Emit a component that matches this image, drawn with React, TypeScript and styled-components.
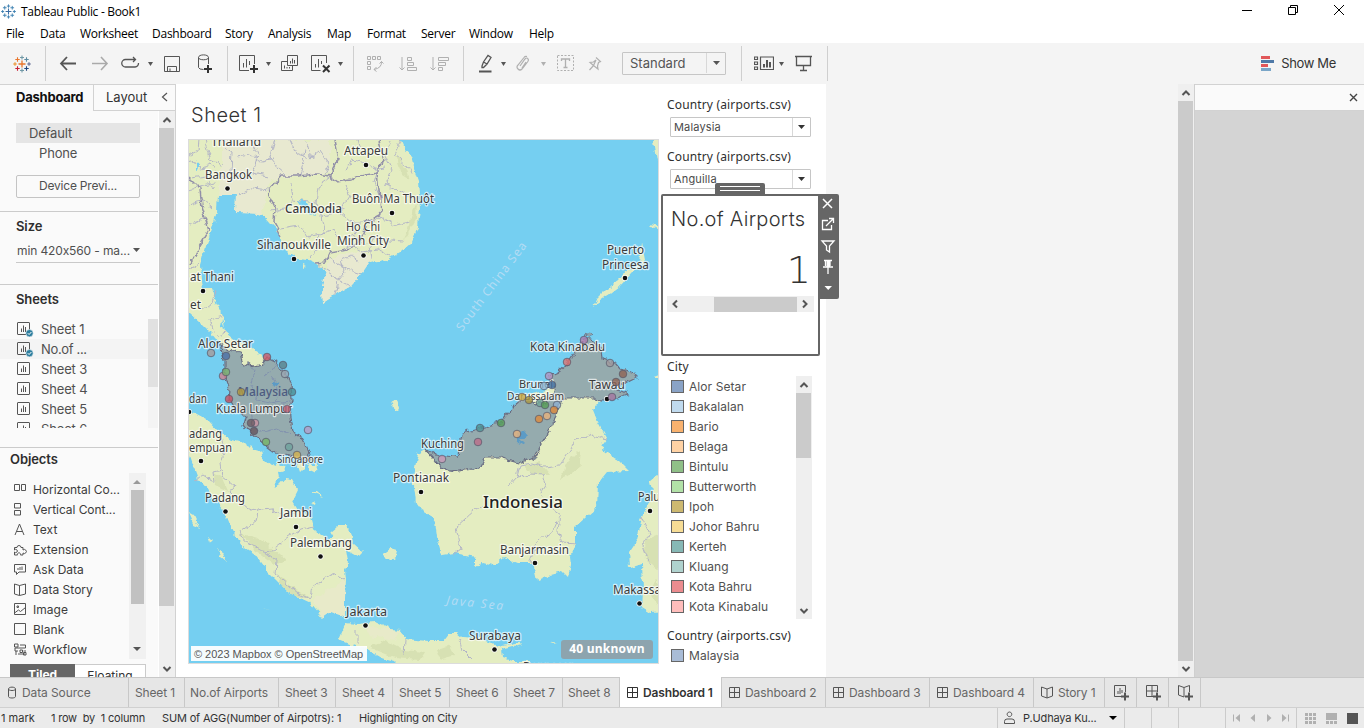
import React from "react";
import styled, { createGlobalStyle, css } from "styled-components";

const GlobalStyle = createGlobalStyle`
  * { box-sizing: border-box; }
  body { margin: 0; overflow: hidden; background: #fff; }
`;

const uiFont = `Inter, "Liberation Sans", sans-serif`;
const winFont = `"Open Sans", "Noto Sans", sans-serif`;

/* ---------- generic text ---------- */
const Label = styled.span<{ $ls?: number }>`
  white-space: pre;
  letter-spacing: ${(p) => p.$ls ?? 0}px;
`;

/* ---------- window frame ---------- */
const Frame = styled.div`
  width: 1364px;
  height: 728px;
  display: flex;
  flex-direction: column;
  overflow: hidden;
  font-family: ${uiFont};
  font-feature-settings: "calt" 0;
  font-size: 13px;
  color: #505050;
  background: #fff;
`;

const TitleBar = styled.header`
  height: 24px;
  flex: none;
  display: flex;
  align-items: center;
  padding: 0 19px 2px 1px;
  font-family: ${winFont};
  font-size: 12px;
  color: #000;
`;
const WindowTitle = styled.span`
  margin-left: 5px;
  letter-spacing: -0.3px;
  flex: 1;
`;
const WindowButtons = styled.div`
  display: flex;
  gap: 34px;
  align-items: center;
  padding-bottom: 2px;
`;

const MenuBar = styled.nav`
  height: 19px;
  flex: none;
  display: flex;
  align-items: center;
  font-family: ${winFont};
  font-size: 12px;
  color: #000;
`;
const MenuItem = styled.span<{ $w: number }>`
  width: ${(p) => p.$w}px;
  white-space: nowrap;
  letter-spacing: -0.25px;
  padding-left: 6px;
`;

const Toolbar = styled.div`
  height: 41px;
  flex: none;
  background: #f4f4f4;
  display: flex;
  align-items: center;
`;
const ToolGroup = styled.div<{ $w: number }>`
  width: ${(p) => p.$w}px;
  height: 35px;
  border-right: 1px solid #cfcfcf;
  display: flex;
  align-items: center;
`;
const Tool = styled.span<{ $l: number }>`
  margin-left: ${(p) => p.$l}px;
  display: flex;
  flex: none;
`;
const FitSelect = styled.div`
  margin-left: 20px;
  width: 104px;
  height: 23px;
  border: 1px solid #c6c6c6;
  border-radius: 1px;
  display: flex;
  align-items: center;
  padding: 0 0 1px 7px;
  font-size: 13px;
  color: #555;
`;
const SelectArrow = styled.span<{ $w: number }>`
  margin-left: auto;
  width: ${(p) => p.$w}px;
  align-self: stretch;
  border-left: 1px solid #d8d8d8;
  display: flex;
  align-items: center;
  justify-content: center;
`;
const ShowMe = styled.div`
  margin-left: auto;
  margin-right: 28px;
  padding-bottom: 1px;
  display: flex;
  align-items: center;
  gap: 6px;
  color: #333;
`;

/* ---------- body ---------- */
const Body = styled.main`
  height: 593px;
  flex: none;
  display: flex;
`;

const SidePane = styled.aside`
  width: 176px;
  height: 593px;
  border-right: 1px solid #d2d2d2;
  background: #fafafa;
  display: flex;
  flex-direction: column;
  overflow: hidden;
`;
const PaneTabs = styled.div`
  height: 27px;
  flex: none;
  display: flex;
  border-top: 1px solid #d2d2d2;
`;
const PaneTab = styled.div<{ $active?: boolean }>`
  width: ${(p) => (p.$active ? 93 : 82)}px;
  display: flex;
  align-items: center;
  padding-bottom: ${(p) => (p.$active ? 2 : 1)}px;
  padding-left: ${(p) => (p.$active ? 16 : 12)}px;
  font-weight: ${(p) => (p.$active ? 700 : 400)};
  color: ${(p) => (p.$active ? "#111" : "#333")};
  ${(p) =>
    !p.$active &&
    css`
      border-left: 1px solid #d2d2d2;
      border-bottom: 1px solid #d2d2d2;
    `}
`;
const PaneBody = styled.div`
  display: flex;
  flex: 1;
  min-height: 0;
`;
const PaneContent = styled.div`
  width: 159px;
  overflow: hidden;
  border-right: 1px solid #fff;
`;
const Section = styled.section<{ $h: number }>`
  height: ${(p) => p.$h}px;
  border-bottom: 1px solid #cbcbcb;
  overflow: hidden;
`;
const SectionTitle = styled.h3<{ $l?: number; $h: number; $t?: number }>`
  margin: 0;
  height: ${(p) => p.$h}px;
  padding: ${(p) => p.$t ?? 5}px 0 0 ${(p) => p.$l ?? 16}px;
  font-size: 13px;
  line-height: 18px;
  font-weight: 600;
  letter-spacing: -0.1px;
  color: #2e2e2e;
`;
const DeviceRow = styled.div<{ $on?: boolean }>`
  margin: ${(p) => (p.$on ? "12px" : "0")} 0 0 16px;
  width: 124px;
  height: 20px;
  line-height: 20px;
  padding-left: ${(p) => (p.$on ? 13 : 23)}px;
  letter-spacing: -0.15px;
  background: ${(p) => (p.$on ? "#e5e5e5" : "none")};
`;
const PreviewButton = styled.div`
  margin: 12px 0 0 16px;
  width: 124px;
  height: 23px;
  border: 1px solid #c4c4c4;
  border-radius: 2px;
  text-align: center;
  line-height: 20px;
  font-size: 12px;
  letter-spacing: -0.2px;
`;
const SizeSelect = styled.div`
  margin-left: 16px;
  width: 124px;
  height: 25px;
  border-bottom: 1px solid #c9c9c9;
  display: flex;
  align-items: center;
  justify-content: space-between;
  font-size: 12px;
  padding-left: 1px;
`;
const SheetList = styled.div`
  height: 109px;
  display: flex;
  overflow: hidden;
`;
const SheetRows = styled.div`
  flex: 1;
`;
const SheetRow = styled.div<{ $on?: boolean }>`
  height: 20px;
  display: flex;
  align-items: center;
  gap: 7px;
  padding-left: 17px;
  background: ${(p) => (p.$on ? "#f4f4f4" : "none")};
`;
const SlimTrack = styled.div`
  width: 10px;
  background: #f4f4f4;
`;
const SlimThumb = styled.div`
  height: 68px;
  background: #e1e1e1;
`;
const ObjectList = styled.div`
  display: flex;
  height: 186px;
`;
const ObjectRows = styled.div`
  width: 129px;
  padding-top: 6px;
`;
const ObjectRow = styled.div`
  height: 20px;
  display: flex;
  align-items: center;
  gap: 6px;
  padding-left: 13px;
  font-size: 12px;
  color: #3c3c3c;
  white-space: nowrap;
`;
const Toggle = styled.div`
  margin: 5px 0 0 10px;
  width: 136px;
  height: 22px;
  display: flex;
  border: 1px solid #cbcbcb;
  font-size: 12px;
  text-align: center;
  line-height: 22px;
`;
const ToggleSide = styled.span<{ $on?: boolean; $w: number }>`
  width: ${(p) => p.$w}px;
  flex: none;
  margin: ${(p) => (p.$on ? "-1px 0 0 -1px" : "0")};
  background: ${(p) => (p.$on ? "#666" : "#fff")};
  color: ${(p) => (p.$on ? "#fff" : "#333")};
  font-weight: ${(p) => (p.$on ? 700 : 400)};
`;

/* ---------- scrollbars ---------- */
const VTrack = styled.div<{ $w: number; $bg?: string }>`
  width: ${(p) => p.$w}px;
  flex: none;
  background: ${(p) => p.$bg ?? "#efefef"};
  display: flex;
  flex-direction: column;
  align-items: flex-start;
`;
const ScrollEnd = styled.span<{ $h: number }>`
  height: ${(p) => p.$h}px;
  width: calc(100% - 1px);
  flex: none;
  display: flex;
  align-items: center;
  justify-content: center;
`;
const VThumb = styled.div<{ $h: number; $w: number; $c?: string; $l?: number }>`
  height: ${(p) => p.$h}px;
  width: ${(p) => p.$w}px;
  margin-left: ${(p) => p.$l ?? 0}px;
  background: ${(p) => p.$c ?? "#cbcbcb"};
`;
const Spring = styled.span`
  flex: 1;
`;

/* ---------- dashboard ---------- */
const Dashboard = styled.section`
  width: 650px;
  height: 593px;
  display: flex;
  background: #fff;
`;
const MapColumn = styled.div`
  width: 483px;
  padding-left: 12px;
`;
const SheetTitle = styled.h2`
  margin: 0;
  height: 55px;
  padding: 16px 0 0 3px;
  font-size: 20px;
  line-height: 30px;
  font-weight: 300;
  letter-spacing: 0.5px;
  color: #333;
`;
const MapBox = styled.div`
  position: relative;
  width: 471px;
  height: 525px;
  border: 1px solid #dcdcdc;
  overflow: hidden;
`;
const MapCredit = styled.div`
  position: absolute;
  left: 2px;
  bottom: 2px;
  height: 15px;
  width: 176px;
  padding-left: 3px;
  background: rgba(255, 255, 255, 0.93);
  font: 11px/17px "Liberation Sans", sans-serif;
  letter-spacing: -0.02px;
  color: #555;
  white-space: nowrap;
`;
const UnknownBadge = styled.div`
  position: absolute;
  right: 5px;
  bottom: 4px;
  width: 92px;
  height: 19px;
  border-radius: 3px;
  background: #8da4ae;
  color: #fff;
  font: 700 12px/18px "Open Sans", sans-serif;
  letter-spacing: 0.2px;
  text-align: center;
`;
const SideColumn = styled.div`
  width: 167px;
  padding-left: 2px;
`;
const FilterTitle = styled.div<{ $t: number }>`
  padding-left: 6px;
  height: 16px;
  margin-top: ${(p) => p.$t}px;
  line-height: 16px;
  font-family: "Noto Sans", sans-serif;
  font-size: 12px;
  letter-spacing: 0.15px;
  color: #2f2f2f;
`;
const FilterSelect = styled.div`
  margin: 4px 0 0 9px;
  width: 141px;
  height: 20px;
  border: 1px solid #c6c6c6;
  border-radius: 1px;
  display: flex;
  align-items: center;
  padding-left: 3px;
  font-size: 11px;
  color: #4a4a4a;
`;
const NumberCard = styled.div`
  position: relative;
  margin: 5px 0 0 0;
  width: 159px;
  height: 162px;
  border: 2px solid #666;
  border-radius: 2px;
  background: #fff;
  padding: 9px 4px 0 4px;
`;
const CardTitle = styled.div`
  padding-left: 4px;
  font-size: 20px;
  line-height: 28px;
  font-weight: 300;
  letter-spacing: 0.3px;
  white-space: nowrap;
  color: #333;
`;
const BigNumber = styled.div`
  height: 63px;
  padding: 15px 3px 0 0;
  text-align: right;
  font: 200 38px/44px "DejaVu Sans Light", "DejaVu Sans", sans-serif;
  color: #333;
`;
const HTrack = styled.div`
  width: 147px;
  height: 16px;
  background: #efefef;
  display: flex;
  align-items: center;
`;
const HThumb = styled.div`
  margin-left: 31px;
  width: 83px;
  height: 15px;
  background: #cbcbcb;
`;
const HEnd = styled.span`
  width: 16px;
  display: flex;
  justify-content: center;
`;
const Grip = styled.div`
  position: absolute;
  left: 52px;
  top: -13px;
  width: 50px;
  height: 12px;
  border-radius: 2px 2px 0 0;
  background: #666;
  padding: 3px 5px;
  display: flex;
  flex-direction: column;
  gap: 3px;
`;
const GripLine = styled.span`
  height: 1px;
  background: #fff;
`;
const CardTools = styled.div`
  position: absolute;
  left: 155px;
  top: -2px;
  width: 21px;
  height: 105px;
  border-radius: 0 2px 2px 0;
  background: #666;
`;
const Legend = styled.div`
  display: flex;
  height: 243px;
  margin-top: 1px;
`;
const LegendRows = styled.div`
  width: 135px;
`;
const LegendRow = styled.div<{ $t?: number }>`
  height: 20px;
  margin-top: ${(p) => p.$t ?? 0}px;
  padding-left: 10px;
  display: flex;
  align-items: center;
  gap: 5px;
  font-size: 12px;
  color: #505050;
`;
const Swatch = styled.span<{ $c: string }>`
  width: 13px;
  height: 13px;
  border: 1px solid #666;
  background: ${(p) => p.$c};
`;

const Canvas = styled.div`
  width: 352px;
  background: #f4f4f4;
`;
const RightPane = styled.aside`
  width: 170px;
  border-left: 1px solid #cfcfcf;
  background: #d4d4d4;
`;
const RightHead = styled.div`
  height: 27px;
  border-top: 1px solid #d2d2d2;
  border-bottom: 1px solid #d2d2d2;
  background: #fafafa;
  display: flex;
  justify-content: flex-end;
  align-items: center;
  padding: 0 6px 1px 0;
`;

/* ---------- bottom ---------- */
const TabStrip = styled.nav`
  height: 30px;
  flex: none;
  display: flex;
  border-top: 1px solid #c8c8c8;
  background: #e6e6e6;
`;
const SheetTab = styled.div<{ $w: number; $active?: boolean; $l?: number }>`
  width: ${(p) => p.$w}px;
  flex: none;
  display: flex;
  align-items: center;
  gap: 5px;
  padding-left: ${(p) => p.$l ?? 7}px;
  border-right: 1px solid #c8c8c8;
  font-size: 12px;
  white-space: nowrap;
  color: ${(p) => (p.$active ? "#333" : "#666")};
  font-weight: ${(p) => (p.$active ? 600 : 400)};
  background: ${(p) => (p.$active ? "#fff" : "none")};
  margin-top: ${(p) => (p.$active ? -1 : 0)}px;
`;
const StatusBar = styled.footer`
  height: 21px;
  flex: none;
  display: flex;
  align-items: center;
  border-top: 1px solid #d0d0d0;
  background: #ebebeb;
  font-size: 11px;
  color: #333;
`;
const StatusCell = styled.div<{ $w: number; $line?: boolean; $l?: number }>`
  width: ${(p) => p.$w}px;
  flex: none;
  height: 20px;
  display: flex;
  align-items: center;
  padding-left: ${(p) => p.$l ?? 0}px;
  white-space: nowrap;
  border-left: ${(p) => (p.$line ? "1px solid #cbcbcb" : "none")};
`;
const UserName = styled.span`
  margin: 0 12px 0 8px;
  letter-spacing: -0.15px;
`;

/* ---------- icons ---------- */
const Svg = styled.svg`
  display: block;
  flex: none;
`;
type IconProps = { w: number; h: number; d: string; c?: string; sw?: number; f?: string; fc?: string };
const Icon = ({ w, h, d, c = "#555", sw = 1, f, fc }: IconProps) => (
  <Svg width={w} height={h} viewBox={`0 0 ${w} ${h}`} fill="none">
    {d && <path d={d} stroke={c} strokeWidth={sw} />}
    {f && <path d={f} fill={fc ?? c} />}
  </Svg>
);
const Caret = ({ c = "#555", w = 7 }: { c?: string; w?: number }) => (
  <Icon w={w} h={4} d="" f={`M0 0H${w}L${w / 2} 4Z`} c={c} />
);
const chevrons: Record<string, string> = {
  up: "M1.5 7L5 3.5L8.5 7",
  down: "M1.5 3L5 6.5L8.5 3",
  left: "M7 1.5L3.5 5L7 8.5",
  right: "M3 1.5L6.5 5L3 8.5",
};
const Chevron = ({ dir, sw = 2 }: { dir: string; sw?: number }) => (
  <Icon w={10} h={10} d={chevrons[dir]} sw={sw} />
);

const plusMarks: [number, number, number, string, string][] = [
  [9, 9, 3.5, "#e8762d", "#3b6ea5"],
  [9, 2.5, 2, "#7099a6", "#3b7fb0"],
  [9, 15.5, 2, "#7199a6", "#3b7fb0"],
  [2, 9, 1.8, "#eb912c", "#3b7fb0"],
  [16, 9, 1.8, "#5c6692", "#3b7fb0"],
  [4.5, 4.5, 2.2, "#e8762d", "#3b7fb0"],
  [13.5, 4.5, 2.2, "#5c8aa0", "#3b7fb0"],
  [4.5, 13.5, 2.2, "#c72035", "#3b7fb0"],
  [13.5, 13.5, 2.2, "#1f447e", "#3b7fb0"],
];
const TableauMark = ({ size, mono }: { size: number; mono?: boolean }) => (
  <Svg width={size} height={size} viewBox="0 0 18 18" fill="none">
    {plusMarks.map(([x, y, r, c, m], i) => (
      <path
        key={i}
        d={`M${x - r} ${y}H${x + r}M${x} ${y - r}V${y + r}`}
        stroke={mono ? m : c}
        strokeWidth={i ? 1.1 : 1.3}
      />
    ))}
  </Svg>
);

const SheetIcon = ({ used }: { used?: boolean }) => (
  <Svg width="17" height="16" viewBox="0 0 17 16" fill="none">
    <rect x=".5" y="1.5" width="12" height="12" rx=".5" stroke="#555" />
    <path d="M4.5 7.5V11M6.5 4.5V11M8.5 6V11" stroke="#555" />
    {used && (
      <>
        <circle cx="12.5" cy="12.2" r="3.7" fill="#2f7f9f" stroke="#fafafa" strokeWidth=".6" />
        <path d="M10.8 12.2L12.1 13.5L14.4 11" stroke="#fff" />
      </>
    )}
  </Svg>
);

const chartBox = "M.5 1.5H15.5V16.5H.5Z";
const tools = {
  back: "M8 2L2 8.5L8 15M2 8.5H17",
  fwd: "M10 2L16 8.5L10 15M16 8.5H1",
  replay: "M14.5 4.5H4.5A3.5 3.5 0 0 0 4.5 12H14A3.8 3.8 0 0 0 17.5 8M12 2L14.5 4.5L12 7",
  save: "M.5 .5H15.5V15.5H.5ZM3.5 15.5V10.5H12.5V15.5M6 15V12.5",
};

const dashIcon = "M.5 .5H10.5V10.5H.5ZM5.5 .5V10.5M.5 5.5H10.5";
const storyIcon = "M.5 1L6 3L11.5 1V10L6 12L.5 10ZM6 3V12";

/* ---------- map ---------- */
const mainland =
  "M180 130H396L403 146L411 156L415 173L418 182L419 193L420 208L418 226L411 243L402 251L388 259L378 263L371 264L368 258L360 276L351 286L335 295L323 303L322 286L327 275L326 271L315 263L308 260L298 259L291 254L283 249L281 240L280 233L270 224L263 216L253 212L236 213L237 195H218L217 211L213 226L206 246L201 264L202 280L203 289H213L216 303L223 316L226 333L238 343L251 349L265 357L277 362L284 373L291 384L292 400L290 408L293 432L300 436L305 445L311 460L300 459L276 453L259 440L248 430L243 424L245 417L235 408L229 399L230 390L226 380L224 372L224 360L220 344L211 333L201 323L190 313H180Z";
const peninsula =
  "M220 344L228 350L240 352L243 366L248 362L254 366L261 364L267 357L277 362L284 373L291 384L292 400L290 408L293 432L300 436L305 445L311 460L300 459L276 453L259 440L248 430L243 424L245 417L235 408L229 399L230 390L226 380L224 372L224 360Z";
const sumatra =
  "M180 410L195 413L208 420L218 431L231 440L240 442L245 441L247 446L252 447L255 452L262 450L264 460L271 466L277 462L284 466L285 471L279 473L280 478L274 483L272 487L281 484L286 478L292 479L298 490L293 500L300 512L311 517L315 532L326 538L335 538L346 550L348 562L345 570L346 580L344 617L340 613L331 612L323 618L311 603L300 598L288 592L276 580L266 570L255 555L246 549L238 540L231 527L225 512L216 500L208 490L198 478L189 453L180 448Z";
const java =
  "M345 623L358 624L375 622L390 629L401 630L405 640L428 642H443L450 633H457L462 637L480 638L494 643L498 647L520 642L522 644L501 649L502 658L512 661L530 661V680H410L395 661L380 657L368 650L352 645L338 639Z";
const borneo =
  "M425 449L418 453L413 477L416 503L421 510L430 515L435 522L437 537L442 555L454 553L475 557V567L482 563L494 566L503 558L517 563L533 563L537 581L552 575L563 572L568 577L571 565L570 557L575 543V528L597 508L598 483L607 472L629 471L620 462L600 447L607 438L597 420L593 410L600 401L628 394L614 388L623 384L637 377L635 373L620 369L615 363L603 359L602 349L591 339L583 339L575 352L567 363L557 372L548 376L550 388L540 392L523 396L513 407L500 423L480 428L463 433L458 447L457 457L435 455Z";
const sarawak =
  "M425 449L435 455L457 457L458 447L463 433L480 428L500 423L513 407L523 398L535 404L541 401L546 403L548 394L553 398L556 388L550 388L548 376L557 372L567 363L575 352L583 339L591 339L602 349L603 359L615 363L620 369L635 373L637 377L623 384L614 388L628 394L607 401L600 401L593 398H563L559 404L557 417L548 433L540 448L535 458L517 463L500 458H485L480 468L450 472L437 463Z";
const islets =
  "M331 532L338 526H346L351 533L353 543L363 552L358 557L346 550L335 538ZM383 553L390 548L397 550L396 557L390 561L384 557ZM593 306L597 299L613 283L628 271L640 263L642 243L645 259L633 272L620 286L603 299ZM652 135H662V164L656 160ZM651 223L660 227V230L652 226ZM188 512L195 516L201 529L194 526ZM217 547L223 552L227 562L221 557ZM208 536L213 541L210 542ZM312 492L317 492L323 497L317 495ZM311 502L316 500L315 504ZM391 402L396 401L398 408L394 411ZM304 264L306 265L304 269ZM297 463L306 466L300 472ZM308 466L317 466L316 473L310 470ZM549 642L556 642L552 643ZM263 608L268 610L265 609ZM652 378L660 375V378Z";
const sulawesi =
  "M665 475L658 475L650 482L652 491L650 500L642 517L637 540L629 552L630 567L642 563L643 590L642 608L650 613L665 612Z";
const shading =
  "M242 534L262 540L286 560L275 565L255 550ZM214 473L222 478L228 492L215 486ZM412 215L417 200L416 220L404 241ZM278 575L296 590L309 597L296 597L280 585ZM370 648L385 640L405 650L425 652L420 660L395 658ZM525 465L540 462L550 475L530 475ZM565 465L580 450L578 470L560 480ZM645 540L658 535V570L646 560ZM648 590L658 580V605ZM395 155L405 165L410 180L402 175ZM436 650L450 645L455 655L440 660Z";
const provinces =
  "M189 225L206 218M225 147L232 152L231 172L244 180L252 173L268 176M204 140L210 160L222 165M189 190L215 183M240 195L252 188L269 190M275 140L270 158L278 168L286 175M290 140L296 153L310 158L320 150L330 165L325 174M236 157L250 155L262 161L275 158M252 140L258 155L252 173M300 176L305 150M345 172L352 160L366 163L378 170L384 168M358 140L362 155M391 140L385 155L392 170L385 185L398 190L415 200M378 170L374 183L381 200L380 216L395 225L410 222M291 183L293 200L284 208L270 210M293 200L316 203L322 216L340 212L350 196L345 185M316 203L318 187L330 178M280 228L300 225L308 237L320 234L317 250L310 258M320 234L332 230L340 240L355 236L365 245M322 216L325 232M340 212L352 222L370 222L382 216M355 236L352 222M330 255L338 265L350 270L362 274M335 295L338 280L345 272L340 262L352 256L360 262M328 273L338 280L350 286M342 250L350 245L362 252L378 250L391 256M365 245L375 238L390 240L404 241M401 140L395 155L407 165L412 175M370 245L372 260M318 264L330 272M216 290L212 303L203 310M223 316L210 320L214 333M226 333L217 336M306 140L312 158M189 160L200 168L212 165L223 178M192 178L205 176L214 190M199 140L198 150L189 155M190 205L203 200L212 208M189 270L200 262M195 480L203 475L214 482L213 472L221 470M221 436L224 450L220 463L222 476L234 486L230 492L243 505L256 511L271 509L285 518L300 510L311 509M257 511L255 522L242 530L244 540L262 550L271 551L285 540L291 536M290 536L302 529L314 526M262 550L277 560L276 575L288 585L298 593L310 598L312 587L333 573L345 580M357 629L357 643M405 640L404 655M459 638L462 650L470 658M453 555L460 550L456 527L475 510L482 506M508 487L517 477L530 474L543 475L546 484L540 493L549 507L560 515L553 530L535 545L530 562M560 515L558 530L562 542L577 543M517 477L520 465L533 463L545 467L560 465L570 450L575 440L593 435L607 439M642 517L649 533L643 545L650 565";
const borders =
  "M189 178L200 189L202 207L209 230L199 247L190 264M269 196L270 190L282 176H297L317 174L330 176M269 196L275 208L274 222L281 235M330 176L338 160L334 140M330 176L338 182L350 180L360 175L377 172L384 160L380 150L378 140M377 172L379 190L381 214L366 222L364 235L351 248L330 252L325 262L315 263";

const cityLabels: [string, number, number, number][] = [
  ["Thailand", 211, 146, 50],
  ["Attapeu", 344, 155, 44],
  ["Bangkok", 205, 179, 47],
  ["Buôn Ma Thuột", 352, 203, 82],
  ["Ho Chi", 346, 231, 34],
  ["Minh City", 337, 245, 52],
  ["Sihanoukville", 257, 249, 74],
  ["at Thani", 190, 281, 44],
  ["et", 190, 309, 11],
  ["Alor Setar", 198, 348, 55],
  ["Puerto", 607, 254, 37],
  ["Princesa", 602, 269, 47],
  ["Kota Kinabalu", 530, 351, 75],
  ["Tawau", 589, 389, 36],
  ["Kuala Lumpur", 216, 413, 76],
  ["dan", 189, 403, 18],
  ["adang", 189, 438, 33],
  ["empuan", 189, 452, 43],
  ["Padang", 205, 502, 40],
  ["Jambi", 280, 517, 32],
  ["Palembang", 290, 547, 62],
  ["Kuching", 421, 448, 43],
  ["Pontianak", 393, 482, 56],
  ["Banjarmasin", 500, 554, 69],
  ["Jakarta", 346, 616, 41],
  ["Surabaya", 469, 640, 52],
  ["Palu", 638, 501, 22],
  ["Makassar", 613, 594, 53],
  ["Denpasar", 523, 671, 50],
];
const cityDots: [number, number][] = [
  [227.5, 188.5], [366, 165], [392, 213], [363.5, 255.5], [294, 259], [203, 291], [625, 278], [201, 461],
  [225.5, 511.5], [296, 527], [320.5, 556.5], [421, 492], [535, 563], [365.5, 625.5], [494.5, 649.5], [650, 511],
  [639.5, 603.5], [607, 399], [189, 412],
];
const airports: [number, number, string][] = [
  [211, 353, "#a89a9a"], [226, 356, "#4b71a6"], [267, 357, "#d05a68"], [283, 365, "#5d7f88"], [285, 374, "#9aa6b2"],
  [223, 376, "#d0808e"], [226, 372, "#79b070"], [229, 399, "#c94f62"], [241, 392, "#b39a3c"], [292, 392, "#4c8f93"],
  [287, 409, "#b95f74"], [255, 423, "#c991a0"], [251, 423, "#6d5c64"], [254, 431, "#65545c"], [266, 442, "#76b468"],
  [289, 447, "#6ea39c"], [297, 455, "#d3b04c"], [308, 430, "#b79bc6"],
  [584, 340, "#a979ad"], [567, 362, "#dd7272"], [549, 376, "#b293c2"], [610, 363, "#a39a9c"], [623, 374, "#8f6454"],
  [616, 382, "#8f6454"], [612, 397, "#a577a0"], [544, 386, "#8fb6d2"], [552, 385, "#3f6d9c"], [522, 397, "#ccaa44"],
  [529, 400, "#a8933c"], [540, 403, "#72a79a"], [545, 405, "#569d56"], [557, 405, "#8fb0cf"], [554, 410, "#dd8a3b"],
  [547, 416, "#e6b27c"], [539, 419, "#dd8a3b"], [517, 434, "#e6b27c"], [501, 423, "#569d56"], [480, 428, "#4c9396"],
  [478, 442, "#bb6d88"], [442, 459, "#c99bb8"],
];

const MapText = styled.g`
  font-family: "Noto Sans", sans-serif;
  paint-order: stroke;
  stroke-linejoin: round;
`;
const CityDot = styled.circle`
  fill: #111;
  stroke: #fff;
  stroke-width: 1.4px;
  paint-order: stroke;
`;

const AirportMap = () => (
  <Svg width="469" height="523" viewBox="189 140 469 523">
    <defs>
      <filter id="coast" x="0" y="0" width="100%" height="100%">
        <feTurbulence type="fractalNoise" baseFrequency="0.13" numOctaves="3" seed="4" result="n" />
        <feDisplacementMap in="SourceGraphic" in2="n" scale="7" xChannelSelector="R" yChannelSelector="G" />
      </filter>
    </defs>
    <rect x="180" y="130" width="490" height="550" fill="#74cff1" />
    <g filter="url(#coast)">
      <rect x="180" y="130" width="490" height="550" fill="#74cff1" />
      <path d={mainland + sumatra + java + borneo + islets + sulawesi} fill="#e4edc1" />
      <path d="M222 140H330V172L270 180L262 214L236 213L237 195H218L222 170Z" fill="#e8e9d0" />
      <path d="M330 258L360 250L372 258L360 276L351 286L335 295L323 303L322 286Z" fill="#e8e9d0" />
      <path d="M312 600L345 580V617L331 612L323 618ZM365 626L400 631L395 640L370 636Z" fill="#e8eac9" />
      <path d={shading} fill="#d3dcae" opacity=".75" />
      <path d={provinces} fill="none" stroke="#b4b6c6" />
      <path d={borders} fill="none" stroke="#9290a8" strokeWidth="1.5" />
      <path d="M298 200L306 203L312 210L316 215L308 213L302 206ZM196 160L199 166L196 172ZM222 320L225 328L221 326Z" fill="#74cff1" />
      <path d={peninsula + sarawak} fill="#7f99a9" fillOpacity=".78" stroke="#686c82" strokeWidth="1.2" />
      <path d="M248 362L255 372L251 385L257 400L275 404L291 402M251 409L253 425L262 432L277 429L290 434M263 376L272 370L277 362M275 404L279 390L272 376" fill="none" stroke="#7f8fae" strokeWidth=".9" />
      <path d="M273 380L280 382L278 387L273 385ZM516 433L523 431L527 436L521 441L525 445L518 442Z" fill="#5b9bc6" />
      <path d="M585 334L590 332L594 335L588 337Z" fill="#8ba3ae" stroke="#686c82" strokeWidth=".8" />
    </g>

    {cityDots.map(([x, y], i) => (
      <CityDot key={i} cx={x} cy={y} r="2.3" />
    ))}
    <MapText fontSize="12" fill="#3b3b3b" stroke="#ffffffb0" strokeWidth="2.4">
      {cityLabels.map(([t, x, y, w]) => (
        <text key={t + x} x={x} y={y} textLength={w} lengthAdjust="spacingAndGlyphs">{t}</text>
      ))}
      <text x="277" y="463" fontSize="10" textLength="46" lengthAdjust="spacingAndGlyphs">Singapore</text>
      <text x="519" y="388" fontSize="10" textLength="34" lengthAdjust="spacingAndGlyphs">Brunei</text>
      <text x="507" y="400" fontSize="10" textLength="57" lengthAdjust="spacingAndGlyphs">Darussalam</text>
      <text x="285" y="213" fontWeight="500" textLength="57" lengthAdjust="spacingAndGlyphs">Cambodia</text>
      <text x="238" y="396" fontWeight="500" fill="#4d5b80" stroke="none" textLength="50" lengthAdjust="spacingAndGlyphs">Malaysia</text>
      <text x="483" y="508" fontSize="17" fontWeight="500" fill="#222" textLength="80" lengthAdjust="spacingAndGlyphs">Indonesia</text>
    </MapText>
    <MapText fontSize="12" fill="#b3dcf4">
      <text transform="translate(462 332) rotate(-53)" textLength="108">South China Sea</text>
      <text transform="translate(446 604) rotate(6)" fontStyle="italic" textLength="57">Java Sea</text>
    </MapText>
    {airports.map(([x, y, c], i) => (
      <circle key={i} cx={x} cy={y} r="3.8" fill={c} fillOpacity=".8" stroke="#55586a" strokeOpacity=".8" strokeWidth=".9" />
    ))}
  </Svg>
);

/* ---------- data ---------- */
const menu: [string, number][] = [
  ["File", 34], ["Data", 40], ["Worksheet", 72], ["Dashboard", 73], ["Story", 43], ["Analysis", 59],
  ["Map", 40], ["Format", 54], ["Server", 48], ["Window", 60], ["Help", 40],
];
const objects: [string, string][] = [
  ["Horizontal Co...", "M1.5 2.5H6.5V8.5H1.5ZM8.5 2.5H12.5V8.5H8.5Z"],
  ["Vertical Cont...", "M1.5 1.5H7.5V6H1.5ZM1.5 8.5H7.5V13H1.5Z"],
  ["Text", "M2 13L6.5 2L11 13M3.5 9.5H9.5"],
  ["Extension", "M1.5 5.5H4A2 2 0 1 1 8 5.5H10V8A2 2 0 1 1 10 11V13H7.5A1.6 1.6 0 1 0 4.5 13H1.5V10A1.6 1.6 0 1 0 1.5 8Z"],
  ["Ask Data", "M1.5 2.5H12.5V10H6L3.5 12.5V10H1.5ZM5 8V6M7 8V5M9 8V4.5"],
  ["Data Story", "M1.5 2L6.5 3.5L12.5 2V12L6.5 13.5L1.5 12ZM6.5 3.5V13.5"],
  ["Image", "M1.5 1.5H12.5V12.5H1.5ZM1.5 11L5.5 8L7.5 9.5L12.5 5.5M4 4H5.5V5.5H4Z"],
  ["Blank", "M1.5 1.5H12.5V12.5H1.5Z"],
  ["Workflow", "M1.5 2H5V5H1.5ZM7 3H12.5V6H2V9H5M7 8H9.5V10.5H7ZM10.5 9H13M5 12H12M3 9V13M10.5 10.5H13V13H10.5Z"],
];
const cities: [string, string][] = [
  ["Alor Setar", "#8aa3c6"], ["Bakalalan", "#c0daee"], ["Bario", "#f8b26f"], ["Belaga", "#ffd2a4"],
  ["Bintulu", "#90c088"], ["Butterworth", "#b2e1a7"], ["Ipoh", "#cdb971"], ["Johor Bahru", "#f6dc95"],
  ["Kerteh", "#87b8b5"], ["Kluang", "#b0d2ce"], ["Kota Bahru", "#eb8c8f"], ["Kota Kinabalu", "#ffbdbb"],
];
const sheetTabs: [string, number][] = [
  ["Sheet 1", 56], ["No.of Airports", 94], ["Sheet 3", 57], ["Sheet 4", 57], ["Sheet 5", 57],
  ["Sheet 6", 57], ["Sheet 7", 56], ["Sheet 8", 57],
];

export default function App() {
  return (
    <Frame>
      <GlobalStyle />
      <TitleBar>
        <TableauMark size={15} mono />
        <WindowTitle>Tableau Public - Book1</WindowTitle>
        <WindowButtons>
          <Icon w={12} h={12} d="M1 6.5H11" c="#000" />
          <Icon w={12} h={12} d="M1.5 3.5H8.5V10.5H1.5ZM3.5 3.5V1.5H10.5V8.5H8.5" c="#000" />
          <Icon w={12} h={12} d="M1 1L11 11M11 1L1 11" c="#000" />
        </WindowButtons>
      </TitleBar>
      <MenuBar>
        {menu.map(([t, w]) => <MenuItem key={t} $w={w}>{t}</MenuItem>)}
      </MenuBar>

      <Toolbar>
        <ToolGroup $w={46}>
          <Tool $l={13}><TableauMark size={18} /></Tool>
        </ToolGroup>
        <ToolGroup $w={182}>
          <Tool $l={13}><Icon w={18} h={17} d={tools.back} sw={1.8} /></Tool>
          <Tool $l={14}><Icon w={18} h={17} d={tools.fwd} sw={1.6} c="#aaa" /></Tool>
          <Tool $l={12}><Icon w={19} h={17} d={tools.replay} sw={1.3} /></Tool>
          <Tool $l={8}><Caret w={5} /></Tool>
          <Tool $l={11}><Icon w={17} h={16} d={tools.save} /></Tool>
          <Tool $l={16}>
            <Icon w={17} h={19} d="M1.5 3.5C1.5 0 11.5 0 11.5 3.5V10M1.5 3.5V13.5Q2 15.5 6.5 15.5M1.5 3.5C1.5 6.5 11.5 6.5 11.5 3.5" f="M10 11H12V14H15V16H12V19H10V16H7V14H10Z" fc="#333" />
          </Tool>
        </ToolGroup>
        <ToolGroup $w={126}>
          <Tool $l={11}><Icon w={20} h={19} d="M10 16.5H.5V1.5H15.5V10M4.5 9V13.5M7.5 5V13.5M10.5 7V11" f="M14 11H16V14H19V16H16V19H14V16H11V14H14Z" fc="#333" /></Tool>
          <Tool $l={7}><Caret w={5} /></Tool>
          <Tool $l={10}><Icon w={18} h={17} d="M6.5 .5H16.5V10.5H6.5ZM6.5 6.5H.5V15.5H11.5V10.5M9.5 6V8.5M11.5 3.5V8.5M13.5 5V8.5M3.5 10.5V13.5M6 12V13.5M8.5 12V13.5" /></Tool>
          <Tool $l={12}>
            <Svg width="20" height="19" viewBox="0 0 20 19" fill="none" stroke="#555">
              <path d="M9.5 16.5H.5V1.5H15.5V9M4.5 10V13.5M7.5 5V13.5M10.5 7V10" />
              <path d="M12 11.5L18.5 18M18.5 11.5L12 18" stroke="#333" strokeWidth="2" />
            </Svg>
          </Tool>
          <Tool $l={7}><Caret w={5} /></Tool>
        </ToolGroup>
        <ToolGroup $w={110}>
          <Tool $l={12}><Icon w={18} h={17} c="#b0b0b0" d="M1.5 1.5H4.5V4.5H1.5ZM6.5 1.5H9.5V4.5H6.5ZM11.5 1.5H14.5V4.5H11.5ZM1.5 6.5H4.5V9.5H1.5ZM1.5 11.5H4.5V14.5H1.5ZM15.5 6.5Q16 13 8 14.5M13.5 8.5L15.5 6.5L17.5 8.5M10.5 12L8 14.5L10.5 16.5" /></Tool>
          <Tool $l={15}><Icon w={18} h={16} c="#b0b0b0" d="M3 1V14M.5 11.5L3 14L5.5 11.5M8.5 1.5H12.5V4.5H8.5ZM8.5 6.5H14.5V9.5H8.5ZM8.5 11.5H17.5V14.5H8.5Z" /></Tool>
          <Tool $l={13}><Icon w={19} h={16} c="#b0b0b0" d="M3 1V14M.5 11.5L3 14L5.5 11.5M8.5 1.5H18.5V4.5H8.5ZM8.5 6.5H15.5V9.5H8.5ZM8.5 11.5H12.5V14.5H8.5Z" /></Tool>
        </ToolGroup>
        <ToolGroup $w={278}>
          <Tool $l={15}><Icon w={14} h={19} d="M3 12L4.5 8L9 1.5L12 3.5L8 10L4.5 13.5H3ZM4.5 8L8 10" sw={1.3} f="M0 16.5H12.5V18.5H0Z" /></Tool>
          <Tool $l={8}><Caret w={5} /></Tool>
          <Tool $l={10}><Icon w={14} h={17} c="#b0b0b0" d="M4 11L9 4Q11 2 12 4Q13 5 11.5 7L6 14Q4 16 2 14Q0 12 2 10L8 2.5Q9 1 11 1.5M6 13L10 7" sw={1.2} /></Tool>
          <Tool $l={11}><Caret w={5} c="#b0b0b0" /></Tool>
          <Tool $l={11}>
            <Svg width="17" height="17" viewBox="0 0 17 17" fill="none" stroke="#b0b0b0">
              <rect x=".5" y=".5" width="16" height="15" strokeDasharray="2 1.5" />
              <path d="M4.5 6V4H12.5V6M8.5 4V12.5M6.5 12.5H10.5" strokeWidth="1.3" />
            </Svg>
          </Tool>
          <Tool $l={14}><Icon w={14} h={16} c="#b0b0b0" d="M8 1.5L12.5 5.5L10.5 6.5L9.5 10L10 13L5.5 9.5L1.5 14M5.5 9.5L2 6.5L5.5 6L8 4Z" sw={1.2} /></Tool>
          <FitSelect>
            <Label>Standard</Label>
            <SelectArrow $w={19}><Caret w={7} /></SelectArrow>
          </FitSelect>
        </ToolGroup>
        <ToolGroup $w={86}>
          <Tool $l={12}><Icon w={20} h={15} d="M.5 1H3.5V3.5H.5ZM.5 6H3.5V8.5H.5ZM.5 11H3.5V13.5H.5ZM6.5 1H19.5V13.5H6.5Z" f="M9 8H11V11.5H9ZM12 4H14V11.5H12ZM15 6H17V11.5H15Z" sw={1.2} /></Tool>
          <Tool $l={5}><Caret w={5} /></Tool>
          <Tool $l={11}><Icon w={17} h={17} d="M0 1.5H17M1.5 1.5V10.5H15.5V1.5M8.5 10.5V15.5M5 15.5H12" sw={1.3} /></Tool>
        </ToolGroup>
        <ShowMe>
          <Svg width="14" height="15" viewBox="0 0 14 15">
            <path d="M0 0H9V3H0Z" fill="#e15759" />
            <path d="M0 4H13V7H0Z" fill="#4e79a7" />
            <path d="M0 8H7V11H0Z" fill="#e15759" />
            <path d="M0 12H10V15H0Z" fill="#7aa6c8" />
          </Svg>
          <Label $ls={-0.35}>Show Me</Label>
        </ShowMe>
      </Toolbar>

      <Body>
        <SidePane>
          <PaneTabs>
            <PaneTab $active><Label $ls={-0.22}>Dashboard</Label></PaneTab>
            <PaneTab>
              <Label>Layout</Label>
              <Spring />
              <Icon w={17} h={10} d="M9 1L4.5 5L9 9" sw={1.2} />
            </PaneTab>
          </PaneTabs>
          <PaneBody>
            <PaneContent>
              <Section $h={101}>
                <DeviceRow $on>Default</DeviceRow>
                <DeviceRow>Phone</DeviceRow>
                <PreviewButton>Device Previ...</PreviewButton>
              </Section>
              <Section $h={73}>
                <SectionTitle $h={26}>Size</SectionTitle>
                <SizeSelect><Label $ls={-0.12}>min 420x560 - ma...</Label><Caret /></SizeSelect>
              </Section>
              <Section $h={163}>
                <SectionTitle $h={34}>Sheets</SectionTitle>
                <SheetList>
                  <SheetRows>
                    {["Sheet 1", "No.of ...", "Sheet 3", "Sheet 4", "Sheet 5", "Sheet 6"].map((s, i) => (
                      <SheetRow key={s} $on={i === 1}>
                        <SheetIcon used={i < 2} />
                        <Label $ls={i === 1 ? -0.35 : -0.15}>{s}</Label>
                      </SheetRow>
                    ))}
                  </SheetRows>
                  <SlimTrack><SlimThumb /></SlimTrack>
                </SheetList>
              </Section>
              <SectionTitle $h={25} $l={10} $t={2}>Objects</SectionTitle>
              <ObjectList>
                <ObjectRows>
                  {objects.map(([t, d], i) => (
                    <ObjectRow key={t}><Icon w={14} h={14} d={d} /><Label $ls={i < 2 ? -0.06 : 0.02}>{t}</Label></ObjectRow>
                  ))}
                </ObjectRows>
                <VTrack $w={17} $bg="#f1f1f1">
                  <ScrollEnd $h={17}><Icon w={8} h={4} d="" f="M0 4H8L4 0Z" c="#999" /></ScrollEnd>
                  <VThumb $h={114} $w={13} $l={2} $c="#c1c1c1" />
                  <Spring />
                  <ScrollEnd $h={20}><Caret w={8} /></ScrollEnd>
                </VTrack>
              </ObjectList>
              <Toggle>
                <ToggleSide $on $w={65}>Tiled</ToggleSide>
                <ToggleSide $w={70}>Floating</ToggleSide>
              </Toggle>
            </PaneContent>
            <VTrack $w={16}>
              <ScrollEnd $h={17}><Chevron dir="up" /></ScrollEnd>
              <VThumb $h={478} $w={15} />
              <Spring />
              <ScrollEnd $h={17}><Chevron dir="down" /></ScrollEnd>
            </VTrack>
          </PaneBody>
        </SidePane>

        <Dashboard>
          <MapColumn>
            <SheetTitle>Sheet 1</SheetTitle>
            <MapBox>
              <AirportMap />
              <MapCredit>© 2023 Mapbox © OpenStreetMap</MapCredit>
              <UnknownBadge>40 unknown</UnknownBadge>
            </MapBox>
          </MapColumn>
          <SideColumn>
            <FilterTitle $t={13}>Country (airports.csv)</FilterTitle>
            <FilterSelect><Label $ls={0.15}>Malaysia</Label><SelectArrow $w={18}><Caret c="#333" /></SelectArrow></FilterSelect>
            <FilterTitle $t={12}>Country (airports.csv)</FilterTitle>
            <FilterSelect><Label $ls={0.15}>Anguilla</Label><SelectArrow $w={18}><Caret c="#333" /></SelectArrow></FilterSelect>
            <NumberCard>
              <Grip><GripLine /><GripLine /></Grip>
              <CardTitle>No.of Airports</CardTitle>
              <BigNumber>1</BigNumber>
              <HTrack>
                <HEnd><Chevron dir="left" /></HEnd>
                <HThumb />
                <HEnd><Chevron dir="right" /></HEnd>
              </HTrack>
              <CardTools>
                <Svg width="21" height="105" viewBox="0 0 21 105" fill="none" stroke="#fff" strokeWidth="1.3">
                  <path d="M5 5L14 14M14 5L5 14" strokeWidth="1.5" />
                  <path d="M10 26.5H4.5V35.5H13.5V31M8 32L15 25M11 24.5H15.5V29" />
                  <path d="M4 47H16L11.5 52V58L8.5 56V52Z" />
                  <path d="M6 66.5H14M7.5 67V72M12 67V72M5 73H15M10 73V80" />
                  <path d="M8.5 67H12V73H8.5Z M6.5 92H14L10.2 96Z" fill="#fff" stroke="none" />
                </Svg>
              </CardTools>
            </NumberCard>
            <FilterTitle $t={3}>City</FilterTitle>
            <Legend>
              <LegendRows>
                {cities.map(([t, c]) => (
                  <LegendRow key={t}><Swatch $c={c} /><Label $ls={0.08}>{t}</Label></LegendRow>
                ))}
              </LegendRows>
              <VTrack $w={16}>
                <ScrollEnd $h={17}><Chevron dir="up" /></ScrollEnd>
                <VThumb $h={65} $w={15} />
                <Spring />
                <ScrollEnd $h={17}><Chevron dir="down" /></ScrollEnd>
              </VTrack>
            </Legend>
            <FilterTitle $t={9}>Country (airports.csv)</FilterTitle>
            <LegendRow $t={1}><Swatch $c="#a9bcd6" /><Label $ls={0.08}>Malaysia</Label></LegendRow>
          </SideColumn>
        </Dashboard>
        <Canvas />
        <VTrack $w={16}>
          <ScrollEnd $h={17}><Chevron dir="up" /></ScrollEnd>
          <VThumb $h={560} $w={15} />
          <Spring />
          <ScrollEnd $h={16}><Chevron dir="down" /></ScrollEnd>
        </VTrack>
        <RightPane>
          <RightHead><Icon w={9} h={9} d="M1 1L8 8M8 1L1 8" sw={1.4} c="#444" /></RightHead>
        </RightPane>
      </Body>

      <TabStrip>
        <SheetTab $w={129}>
          <Icon w={10} h={13} d="M1.5 3C1.5 0.5 8.5 0.5 8.5 3V10.5C8.5 12.5 1.5 12.5 1.5 10.5ZM1.5 3C1.5 5 8.5 5 8.5 3" />
          <Label $ls={-0.1}>Data Source</Label>
        </SheetTab>
        {sheetTabs.map(([t, w], i) => (
          <SheetTab key={t} $w={w} $l={i === 1 || i > 6 ? 5 : 6}><Label $ls={-0.15}>{t}</Label></SheetTab>
        ))}
        <SheetTab $w={102} $active><Icon w={11} h={11} d={dashIcon} c="#333" /><Label $ls={-0.15}>Dashboard 1</Label></SheetTab>
        {[2, 3, 4].map((n) => (
          <SheetTab key={n} $w={104}><Icon w={11} h={11} d={dashIcon} /><Label $ls={-0.1}>{`Dashboard ${n}`}</Label></SheetTab>
        ))}
        <SheetTab $w={71}><Icon w={12} h={13} d={storyIcon} /><Label $ls={-0.15}>Story 1</Label></SheetTab>
        <SheetTab $w={32} $l={8}><Icon w={17} h={17} d="M8 12.5H1.5V1.5H12.5V8M5 7V10M7 4V10M9 6V9" f="M11 8.5H13V11.5H16V13.5H13V16.5H11V13.5H8V11.5H11Z" /></SheetTab>
        <SheetTab $w={32} $l={8}><Icon w={17} h={17} d="M8 12.5H1.5V1.5H12.5V8M7 1.5V12.5M1.5 7H12.5" f="M11 8.5H13V11.5H16V13.5H13V16.5H11V13.5H8V11.5H11Z" /></SheetTab>
        <SheetTab $w={32} $l={8}><Icon w={17} h={17} d="M12.5 8V1.5L7 3.5L1.5 1.5V11L7 13M7 3.5V13" f="M11 8.5H13V11.5H16V13.5H13V16.5H11V13.5H8V11.5H11Z" /></SheetTab>
      </TabStrip>

      <StatusBar>
        <StatusCell $w={51} $l={1}>1 mark</StatusCell>
        <StatusCell $w={111}><Label $ls={-0.2}>1 row  by  1 column</Label></StatusCell>
        <StatusCell $w={197}><Label $ls={-0.16}>SUM of AGG(Number of Airpotrs): 1</Label></StatusCell>
        <StatusCell $w={638}><Label $ls={-0.2}>Highlighting on City</Label></StatusCell>
        <StatusCell $w={127} $line $l={6}>
          <Icon w={11} h={14} d="M5.5 1A2.3 2.3 0 1 1 5.4 1ZM.5 12.5V10.5Q.5 8 3 8H8Q10.5 8 10.5 10.5V12.5Z" />
          <UserName>P.Udhaya Ku...</UserName>
          <Caret c="#000" w={8} />
        </StatusCell>
        <StatusCell $w={27} $line />
        <StatusCell $w={27} $line />
        <StatusCell $w={47} $line />
        <StatusCell $w={71} $line $l={7}>
          <Icon w={56} h={8} d="M.5 .5V7.5M55.5 .5V7.5" c="#b0b0b0" f="M7 0V8L2.5 4ZM22 0V8L17.5 4ZM34 0V8L38.5 4ZM54 0V8L54 4ZM49 0V8L53.5 4Z" />
        </StatusCell>
        <StatusCell $w={68} $line $l={8}>
          <Svg width="54" height="11" viewBox="0 0 54 11">
            <path fill="#b0b0b0" d="M0 0H3V3H0ZM4 0H7V3H4ZM8 0H11V3H8ZM0 4H3V7H0ZM4 4H7V7H4ZM8 4H11V7H8ZM0 8H3V11H0ZM4 8H7V11H4ZM8 8H11V11H8ZM21 0H32V7H21ZM21 8H24V11H21ZM25 8H28V11H25ZM29 8H32V11H29Z" />
            <path fill="#555" d="M42 0H53V11H42Z" />
          </Svg>
        </StatusCell>
      </StatusBar>
    </Frame>
  );
}
